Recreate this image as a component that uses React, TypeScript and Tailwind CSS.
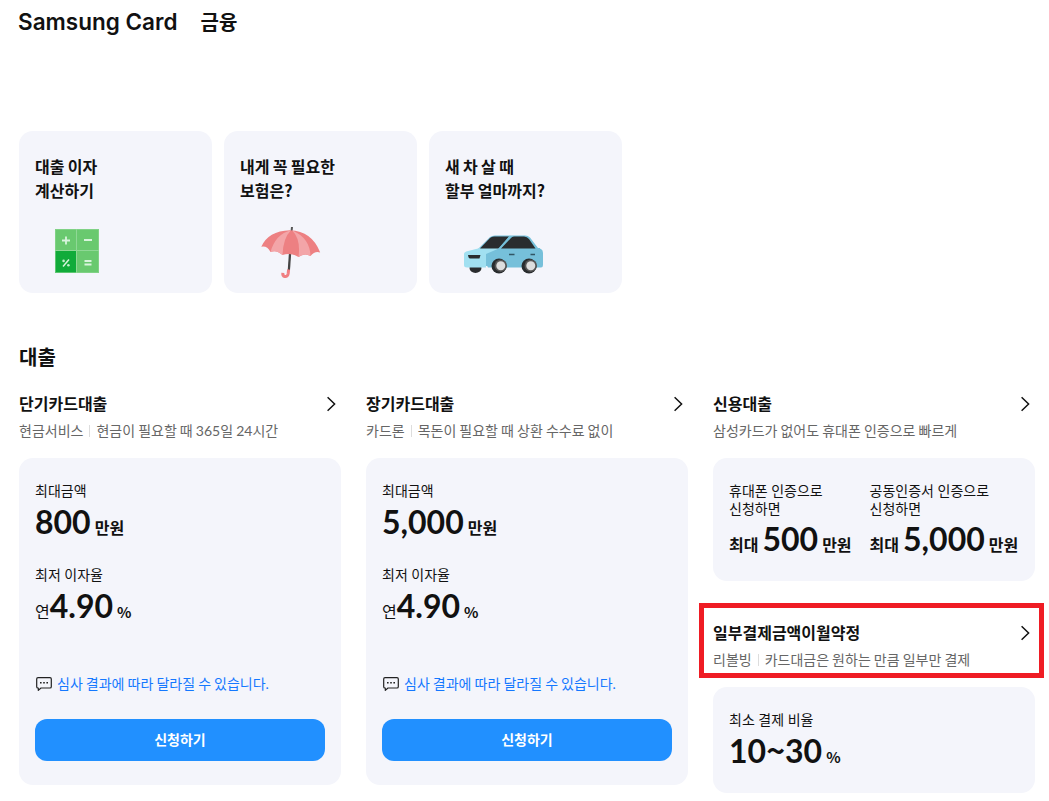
import React from "react";

const Chevron = () => (
  <svg width="10" height="16" viewBox="0 0 10 16" fill="none" className="mr-[5px] shrink-0">
    <path d="M1.6 1.2L8.6 8L1.6 14.8" stroke="#111" strokeWidth="1.5" />
  </svg>
);

const ChatIcon = () => (
  <svg width="18" height="16" viewBox="0 0 18 16" fill="none" className="shrink-0">
    <path
      d="M3 1.7H15Q16.3 1.7 16.3 3V10.7Q16.3 12 15 12H6L3.3 14.4V12H3Q1.7 12 1.7 10.7V3Q1.7 1.7 3 1.7Z"
      stroke="#222"
      strokeWidth="1.2"
      strokeLinejoin="round"
    />
    <path d="M5 6.8h1.6M8.2 6.8h1.6M11.4 6.8H13" stroke="#222" strokeWidth="1.5" />
  </svg>
);

const CalculatorArt = () => (
  <svg width="44" height="44" viewBox="0 0 44 44" className="ml-5 mt-[27px]">
    <rect width="44" height="44" fill="#69c96f" />
    <rect y="22" width="22" height="22" fill="#11ab3a" />
    <path d="M0 21.5H44M21.5 0V44" stroke="#8fd895" strokeWidth="1" />
    <rect x=".5" y=".5" width="43" height="43" fill="none" stroke="#8fd895" strokeOpacity=".6" />
    <g stroke="#d9f4dd" strokeWidth="1.8" fill="none">
      <path d="M7 11.5h8M11 7.5v8M29 11h8M29.5 32h7M29.5 35.5h7" />
      <path d="M8 37.5l6-7" strokeWidth="1.5" />
    </g>
    <circle cx="8.6" cy="31.9" r="1.3" fill="#c3edcb" />
    <circle cx="13.4" cy="36.2" r="1.3" fill="#c3edcb" />
  </svg>
);

const UmbrellaArt = () => (
  <svg width="60" height="52" viewBox="0 0 60 52" className="ml-[21px] mt-[25px]">
    <path d="M31 0L30.5 5" stroke="#555" strokeWidth="2" />
    <path d="M29 27L27.8 44" stroke="#444" strokeWidth="2.3" />
    <path
      d="M27.6 42.5L27.2 46.5Q26.6 50 23.8 49.5Q21.5 49 21.8 45.8"
      fill="none"
      stroke="#f07f82"
      strokeWidth="3"
    />
    <path
      d="M.3 19.8Q7 4 29 3.2Q51 4 59.2 25.5Q54 23.5 49.5 29Q43.5 25.5 37.5 30Q29.5 25 21.5 28Q15.5 22.5 9.5 25Q6 18.5 .3 19.8Z"
      fill="#ed8082"
    />
    <path d="M30 3.2Q14.5 7 9.5 25Q15.5 22.5 21.5 28Q22 11 30 3.2Z" fill="#f3a5a8" />
    <path d="M31 3.2Q40 12 37.5 30Q43.5 25.5 49.5 29Q49 11 31 3.2Z" fill="#f3a5a8" />
  </svg>
);

const CarArt = () => (
  <svg width="80" height="42" viewBox="0 0 80 42" className="ml-[19px] mt-8">
    <ellipse cx="11.5" cy="34" rx="6" ry="5" fill="#292c2e" />
    <path d="M14 15L26 3Q28 1.5 31 1.5H61Q64 1.5 66 3.5L74 14L77 15Q79 16 79 19V31Q79 33.5 77 33.5H24L14 15Z" fill="#76c0da" />
    <path d="M0 20Q0 18 4 17L16 14H38L22 25V33.5H3Q0 33.5 0 31Z" fill="#a1e0f1" />
    <path d="M22 20L36 14H76V32H22Z" fill="#76c0da" />
    <path d="M16 14.5L26 4Q27.5 2.5 30 2.5H45L35 14.5Z" fill="#292c2e" />
    <path d="M37 14.5L47 4Q48 2.5 50 2.5H60Q63 2.5 65 5L71.5 14.5Z" fill="#292c2e" />
    <path d="M34.5 15.5L46.5 2" stroke="#76c0da" strokeWidth="1.5" />
    <path d="M4 21H16.5L15.5 24.5H6Q4.5 24.5 4 21Z" fill="#292c2e" />
    <path d="M45 20.5h5.5M66.5 20.5h4.5" stroke="#315564" strokeWidth="1.3" />
    <g>
      <ellipse cx="35" cy="32" rx="7.5" ry="7.5" fill="#292c2e" />
      <circle cx="36.8" cy="31.7" r="6.2" fill="#555" />
      <circle cx="36.8" cy="31.7" r="4.5" fill="#ddd" />
      <ellipse cx="65" cy="32" rx="7.5" ry="7.5" fill="#292c2e" />
      <circle cx="66.8" cy="31.7" r="6.2" fill="#555" />
      <circle cx="66.8" cy="31.7" r="4.5" fill="#ddd" />
    </g>
  </svg>
);

const shortcuts = [
  { lines: ["대출 이자", "계산하기"], art: <CalculatorArt /> },
  { lines: ["내게 꼭 필요한", "보험은?"], art: <UmbrellaArt /> },
  { lines: ["새 차 살 때", "할부 얼마까지?"], art: <CarArt /> },
];

type HeadingProps = { title: string; name?: string; desc: string };

const ProductHeading = ({ title, name, desc }: HeadingProps) => (
  <div className="h-[66px]">
    <div className="flex h-6 items-center justify-between">
      <h3 className="text-base font-bold leading-6">{title}</h3>
      <Chevron />
    </div>
    <p className="mt-[5px] flex items-center text-sm leading-5 text-[#666] [word-spacing:-0.5px]">
      {name && (
        <>
          <span>{name}</span>
          <span className="mx-1.5 h-3 w-px bg-[#ddd]" />
        </>
      )}
      <span>{desc}</span>
    </p>
  </div>
);

type AmountProps = { before?: string; value: string; unit: string; light?: boolean };

const Amount = ({ before, value, unit, light }: AmountProps) => (
  <p className="mt-px flex h-10 items-baseline whitespace-nowrap text-base font-bold leading-10">
    {before && <span className={light ? "font-normal" : "mr-1"}>{before}</span>}
    <span className="text-[32px]">
      {value.split("~").map((part, i) => (
        <React.Fragment key={part}>
          {i > 0 && <span className="font-['Noto_Sans_CJK_KR',sans-serif] leading-none">~</span>}
          {part}
        </React.Fragment>
      ))}
    </span>
    <span
      className={
        unit === "%"
          ? "ml-1 font-['Noto_Sans_CJK_KR',sans-serif] text-[15px] font-bold leading-none"
          : "ml-1"
      }
    >
      {unit}
    </span>
  </p>
);

const LoanProduct = ({ amount, ...heading }: HeadingProps & { amount: string }) => (
  <section>
    <ProductHeading {...heading} />
    <div className="h-[327px] rounded-[14px] bg-[#f4f5fb] px-4 pt-[23px]">
      <p className="text-sm leading-5">최대금액</p>
      <Amount value={amount} unit="만원" />
      <p className="mt-[23px] text-sm leading-5">최저 이자율</p>
      <Amount before="연" value="4.90" unit="%" light />
      <p className="mt-12 flex items-center gap-1 text-sm leading-5 text-[#1478ff] [word-spacing:-0.5px]">
        <ChatIcon />
        심사 결과에 따라 달라질 수 있습니다.
      </p>
      <button className="mt-[25px] h-[42px] w-full rounded-xl bg-[#2190ff] text-sm font-bold text-white">
        신청하기
      </button>
    </div>
  </section>
);

export default function App() {
  return (
    <div className="h-[801px] w-[1049px] overflow-hidden bg-white pl-[19px] font-[Lato,'Noto_Sans_CJK_KR',sans-serif] text-[#111]">
      <header className="-ml-px flex h-[44px] items-center">
        <span className="w-[182.5px] whitespace-nowrap font-[Inter,sans-serif] text-[22.5px] font-semibold">
          Samsung Card
        </span>
        <span className="text-xl font-bold">금융</span>
      </header>

      <div className="mt-[87px] flex gap-3">
        {shortcuts.map((item) => (
          <a key={item.lines[0]} className="h-[162px] w-[193px] rounded-[14px] bg-[#f4f5fb] px-4 pt-[23px]">
            {item.lines.map((line) => (
              <p key={line} className="font-['Noto_Sans_CJK_KR',sans-serif] text-base font-bold leading-6 [word-spacing:-0.3px]">
                {line}
              </p>
            ))}
            {item.art}
          </a>
        ))}
      </div>

      <h2 className="mt-[49px] text-xl font-bold leading-[30px]">대출</h2>

      <div className="mt-5 grid grid-cols-[322px_322px_322px] gap-[25px]">
        <LoanProduct
          title="단기카드대출"
          name="현금서비스"
          desc="현금이 필요할 때 365일 24시간"
          amount="800"
        />
        <LoanProduct
          title="장기카드대출"
          name="카드론"
          desc="목돈이 필요할 때 상환 수수료 없이"
          amount="5,000"
        />
        <div>
          <ProductHeading title="신용대출" desc="삼성카드가 없어도 휴대폰 인증으로 빠르게" />
          <div className="flex h-[123px] gap-[18px] rounded-[14px] bg-[#f4f5fb] px-4 pt-6">
            <div>
              <p className="text-sm leading-[18px]">휴대폰 인증으로<br />신청하면</p>
              <Amount before="최대" value="500" unit="만원" />
            </div>
            <div>
              <p className="text-sm leading-[18px]">공동인증서 인증으로<br />신청하면</p>
              <Amount before="최대" value="5,000" unit="만원" />
            </div>
          </div>

          <div className="relative mt-10">
            <ProductHeading
              title="일부결제금액이월약정"
              name="리볼빙"
              desc="카드대금은 원하는 만큼 일부만 결제"
            />
            {/* Highlight frame */}
            <div className="absolute -left-[14px] -top-[18px] h-[75px] w-[345px] border-[5px] border-[#ef1c24]" />
          </div>
          <div className="h-[106px] rounded-[14px] bg-[#f4f5fb] px-4 pt-[23px]">
            <p className="text-sm leading-5">최소 결제 비율</p>
            <Amount value="10~30" unit="%" />
          </div>
        </div>
      </div>
    </div>
  );
}
